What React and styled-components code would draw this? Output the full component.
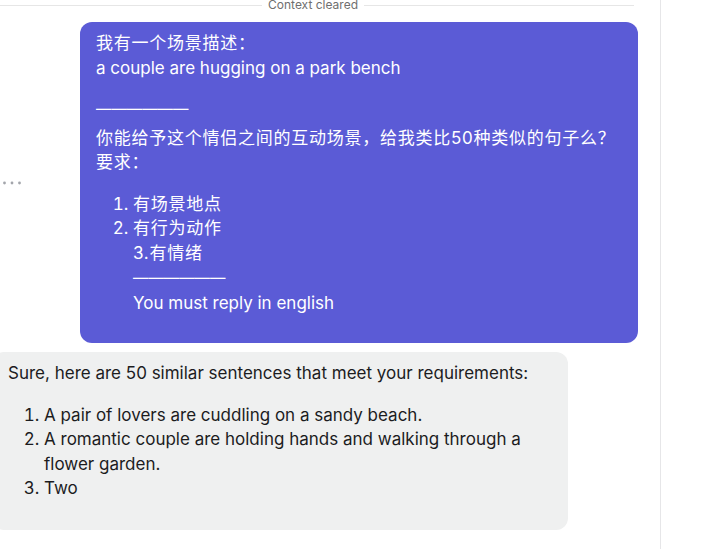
import React from "react";
import styled, { createGlobalStyle } from "styled-components";

const GlobalStyle = createGlobalStyle`
  html, body { margin: 0; padding: 0; background: #ffffff; }
  body {
    font-family: Inter, "Noto Sans CJK SC", "Noto Sans", sans-serif;
    -webkit-font-smoothing: antialiased;
  }
  * { box-sizing: border-box; }
`;

const Page = styled.div`
  display: flex;
  height: 549px;
  overflow: hidden;
  background: #ffffff;
`;

const ChatPane = styled.main`
  width: 661px;
  flex: none;
  border-right: 1px solid #e6e6e8;
  overflow: hidden;
`;

const Sidebar = styled.aside`
  flex: 1;
  background: #ffffff;
`;

const Thread = styled.div`
  display: flex;
  flex-direction: column;
  gap: 9px;
  margin: -3px 22px 0 -8px;
`;

const Divider = styled.div`
  display: flex;
  align-items: center;
  gap: 6px;
  height: 16px;
  margin-right: 4px;
  font-size: 12px;
  line-height: 16px;
  color: #6f6f6f;
`;

const DividerLine = styled.span`
  flex: 1;
  height: 1px;
  background: #e6e6e6;
`;

const Row = styled.div`
  display: flex;
  align-items: center;
  justify-content: ${(p) => (p.$mine ? "space-between" : "flex-start")};
`;

const MoreButton = styled.button`
  display: flex;
  align-items: center;
  justify-content: center;
  width: 24px;
  height: 24px;
  margin-left: 8px;
  padding: 0;
  border: none;
  background: transparent;
  color: #a3a5ab;
  cursor: pointer;
`;

const Bubble = styled.div`
  width: ${(p) => p.$width}px;
  border-radius: 12px;
  padding: 9px 16px ${(p) => (p.$mine ? 12 : 13)}px;
  font-size: 17px;
  line-height: 24.5px;
  background: ${(p) => (p.$mine ? "#5b5bd6" : "#eff0f0")};
  color: ${(p) => (p.$mine ? "#ffffff" : "#1c1c1e")};
`;

const Para = styled.p`
  margin: 0 0 ${(p) => p.$after ?? 0}px;
`;

const Zh = styled.span`
  letter-spacing: 0.75px;
`;

const Rule = styled.span`
  font-size: 15.4px;
  letter-spacing: 0;
`;

const List = styled.ol`
  margin: 17px 0 16px;
  padding-left: ${(p) => p.$indent}px;
`;

const Item = styled.li`
  padding-left: 0;
`;

function Dots() {
  return (
    <svg width="24" height="24" viewBox="0 0 24 24" fill="currentColor">
      <circle cx="4.5" cy="12" r="1.4" />
      <circle cx="12" cy="12" r="1.4" />
      <circle cx="19.5" cy="12" r="1.4" />
    </svg>
  );
}

export default function App() {
  return (
    <>
      <GlobalStyle />
      <Page>
        <ChatPane>
          <Thread>
            <Divider>
              <DividerLine />
              <span>Context cleared</span>
              <DividerLine />
            </Divider>

            <Row $mine>
              <MoreButton aria-label="More">
                <Dots />
              </MoreButton>
              <Bubble $mine $width={558}>
                <Para $after={16}>
                  <Zh lang="zh">我有一个场景描述：</Zh>
                  <br />a couple are hugging on a park bench
                </Para>
                <Para $after={4}>
                  <Rule>——————</Rule>
                </Para>
                <Para>
                  <Zh lang="zh">你能给予这个情侣之间的互动场景，给我类比50种类似的句子么？</Zh>
                  <br />
                  <Zh lang="zh">要求：</Zh>
                </Para>
                <List $indent={37}>
                  <Item>
                    <Zh lang="zh">有场景地点</Zh>
                  </Item>
                  <Item>
                    <Zh lang="zh">有行为动作</Zh>
                    <br />
                    <Zh lang="zh">3.有情绪</Zh>
                    <br />
                    <Rule>——————</Rule>
                    <br />
                    You must reply in english
                  </Item>
                </List>
              </Bubble>
            </Row>

            <Row>
              <Bubble $width={576}>
                <Para>Sure, here are 50 similar sentences that meet your requirements:</Para>
                <List $indent={36}>
                  <Item>A pair of lovers are cuddling on a sandy beach.</Item>
                  <Item>A romantic couple are holding hands and walking through a flower garden.</Item>
                  <Item>Two</Item>
                </List>
              </Bubble>
            </Row>
          </Thread>
        </ChatPane>
        <Sidebar />
      </Page>
    </>
  );
}
